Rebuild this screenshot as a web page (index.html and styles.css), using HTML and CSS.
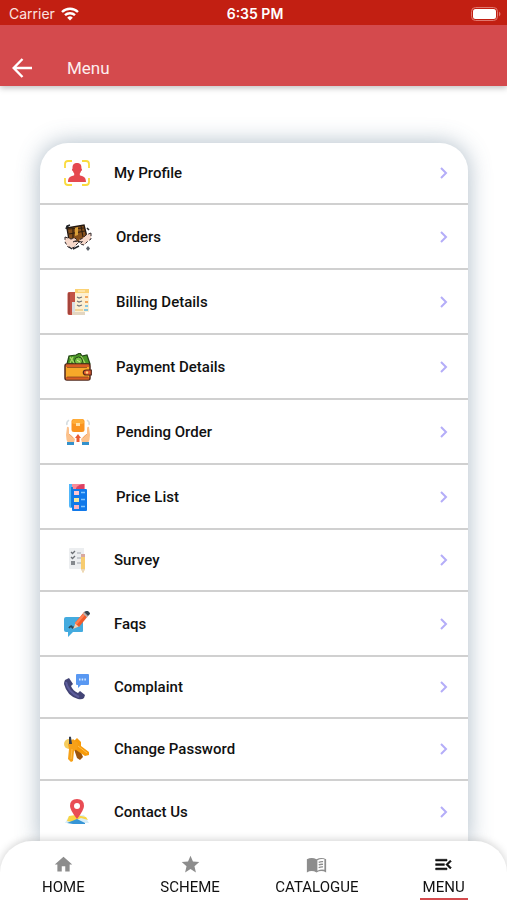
FILE: index.html
```html
<!DOCTYPE html>
<html lang="en">
<head>
<meta charset="utf-8">
<meta name="viewport" content="width=device-width, initial-scale=1">
<title>Menu</title>
<link rel="stylesheet" href="styles.css">
</head>
<body>
<header class="top">
  <div class="status">
    <div class="status-left">
      <span>Carrier</span>
      <svg class="wifi" width="18" height="14" viewBox="0 0 18 14" fill="none" stroke="#fff" stroke-width="2.4"><path d="M1 5a11.5 11.5 0 0 1 16 0M4 8.2a7.2 7.2 0 0 1 10 0"/><path d="M6.2 10.7a4 4 0 0 1 5.6 0L9 13.6z" fill="#fff" stroke="none"/></svg>
    </div>
    <time class="clock">6:35 PM</time>
    <div class="status-right">
      <svg width="30" height="14" viewBox="0 0 30 14"><rect x=".5" y=".5" width="26" height="13" rx="4" fill="none" stroke="#e0786f"/><rect x="2" y="2" width="23" height="10" rx="2.5" fill="#fff"/><path d="M28 4.5q3 2.500 0 5z" fill="#e0786f"/></svg>
    </div>
  </div>
  <div class="bar">
    <button class="back" type="button" aria-label="Back"><svg width="20" height="20" viewBox="0 0 20 20" fill="none" stroke="#fff" stroke-width="2.4"><path d="M20 10H2M10.5 1 1.7 10l8.8 9"/></svg></button>
    <h1>Menu</h1>
  </div>
</header>

<main>
  <nav class="card" aria-label="Account">
    <a class="row" href="#profile">
      <svg class="icon" viewBox="0 0 26 26"><g fill="none" stroke="#fadb3f" stroke-width="1.8"><path d="M1 8V4q0-3 3-3h4M18 1h4q3 0 3 3v4M25 18v4q0 3-3 3h-4M8 25H4q-3 0-3-3v-4"/></g><path d="M13 3c3.500 0 4.700 2.200 4.400 5.500 1 .2.700 2.500-.4 2.800-.2 1-.7 1.700-1.200 2.200v1.800c3 1.200 6.200 1.400 6.200 6.700H4c0-5.300 3.200-5.500 6.200-6.700v-1.800C9.700 13 9.200 12.300 9 11.300c-1.100-.3-1.400-2.600-.4-2.800C8.300 5.200 9.500 3 13 3z" fill="#e5484f"/></svg>
      <span class="label">My Profile</span><svg class="chev" viewBox="0 0 8 12"><path d="m1 1 5 5-5 5"/></svg></a>
    <a class="row tall" href="#orders">
      <svg class="icon wide" viewBox="0 0 28 28"><path d="m3 5 17-3 3 12-8 5-10-2z" fill="#88511c" stroke="#241912" stroke-width="1.400"/><path d="m4 6 16-1M9 5v12M17 3l2 11M5 11l16-3" stroke="#31200f" stroke-width="1.200"/><path d="m11 5 3-1v8l-3 1z" fill="#daa13a"/><path d="m1 14 6 2 4-1 2 2-4 2 5-1v2l-5 5-5-1-3-5zM27 10l-5 2-3 3-4 2 1 2 3-1-3 3 4 1 4-4 3-2z" fill="#f6d8ca" stroke="#30272a" stroke-width="1" stroke-dasharray="3 2"/><path d="m5 24 3 2M9 26l6-3M2 6l1-3 3-1M23 5l2 2" stroke="#25272b" stroke-width="1.500"/><path d="m24 23 2 2.500-2 2.500-2-2.500z" fill="#5b6068"/></svg>
      <span class="label">Orders</span><svg class="chev" viewBox="0 0 8 12"><path d="m1 1 5 5-5 5"/></svg></a>
    <a class="row tall" href="#billing">
      <svg class="icon wide" viewBox="0 0 28 28"><path d="M5 4h9v23H5q-1.500 0-1.500-2V6q0-2 1.500-2z" fill="#c35245"/><path d="M4 5h2v21H4z" fill="#a5443b"/><path d="M8 14h4v12H8z" fill="#d9dde2"/><path d="M11 1h14v23H11z" fill="#fdf0d2"/><path d="M11 1h14v4H11z" fill="#fbd275"/><path d="M14 3h7" stroke="#fff3d5"/><path d="m13 9 2 1 3-1M13 13l2 1 3-1M13 17l2 1 3-1" fill="none" stroke="#70747b" stroke-width="1.300"/><path d="M21 9h3M21 14h3" stroke="#f1a65d" stroke-width="2"/><path d="M21 18h3M20 22h4" stroke="#8bc7df" stroke-width="2"/><path d="M8 24h13v3H8z" fill="#e3d6c1"/><path d="M11 22h8" stroke="#e6b962"/></svg>
      <span class="label">Billing Details</span><svg class="chev" viewBox="0 0 8 12"><path d="m1 1 5 5-5 5"/></svg></a>
    <a class="row tall" href="#payment">
      <svg class="icon wide" viewBox="0 0 28 28"><path d="m3 11 2-8 7-1 4-2 2 3 5-1 3 9z" fill="#4b9827" stroke="#234616" stroke-width="1.200"/><path d="m6 4 5 7M17 3l4 7M9 4l-3 6" stroke="#a4d765" stroke-width="1.300"/><ellipse cx="14.500" cy="8" rx="4" ry="4" fill="#79c347" stroke="#234616"/><path d="m13 7 3 2" stroke="#dbef9b"/><rect x="1" y="11" width="25" height="16" rx="2" fill="#f7a829" stroke="#52281c" stroke-width="1.500"/><path d="M2 11.500h23V14H2zM2 24h23v2.500H2z" fill="#d95d24"/><path d="M3 14.500h20M3 24h21" stroke="#793c1c" stroke-width=".7"/><path d="M27.300 17h-5q-3 0-3 2.500t3 2.500h5z" fill="#e35d32" stroke="#52281c" stroke-width="1.200"/><circle cx="23" cy="19.500" r="1.200" fill="#ffd479"/></svg>
      <span class="label">Payment Details</span><svg class="chev" viewBox="0 0 8 12"><path d="m1 1 5 5-5 5"/></svg></a>
    <a class="row tall" href="#pending">
      <svg class="icon wide" viewBox="0 0 28 28"><rect x="7.500" y="1" width="13" height="13" rx="2.500" fill="#fa9420"/><path d="M8 5q0-4 3-4h6q3 0 3 4l-2 1h-8z" fill="#ffad38"/><path d="M12 5h4v3h-4z" fill="#ffe0a6"/><path d="M5 2q-3 2-2 5M23 2q3 2 2 5" fill="none" stroke="#d4dce0" stroke-width="1.500"/><path d="M3 9q2-1 2 2v5l2 1 4 4-1 4H4q-2-3-2-8zM25 9q-2-1-2 2v5l-2 1-4 4 1 4h6q2-3 2-8z" fill="#fcc18b"/><path d="m5 16 4 4M23 16l-4 4" stroke="#f5a96e"/><path d="m14 16 3 4h-1.500v4h-3v-4H11z" fill="#e95a32"/><path d="M3 24h7v3H3zM18 24h7v3h-7z" fill="#3391cc"/></svg>
      <span class="label">Pending Order</span><svg class="chev" viewBox="0 0 8 12"><path d="m1 1 5 5-5 5"/></svg></a>
    <a class="row tall" href="#prices">
      <svg class="icon wide" viewBox="0 0 28 28"><path d="M5 1h6v24H7q-2 0-2-2z" fill="#50b6fa"/><path d="M8 1h13v6H8z" fill="#f98b97"/><path d="M12 5q3-4 8-4v6h-8z" fill="#dc4265"/><path d="M7 4h2v20H7z" fill="#1781d7"/><rect x="8" y="6" width="15" height="22" rx="1" fill="#1179ea"/><path d="M10 8h5v4h-5z" fill="#ffc6d0"/><path d="M10 15h5v4h-5z" fill="#f8e8a0"/><path d="M10 22h5v4h-5z" fill="#ffb3bd"/><path d="M17 9.500h4M17 16.500h4M17 23.500h4" stroke="#82c6ff" stroke-width="1.500"/></svg>
      <span class="label">Price List</span><svg class="chev" viewBox="0 0 8 12"><path d="m1 1 5 5-5 5"/></svg></a>
    <a class="row" href="#survey">
      <svg class="icon" viewBox="0 0 26 26"><path d="M6 1h14v21H6q-1 0-1-1V2q0-1 1-1z" fill="#eceef0"/><g fill="none" stroke="#6c7075" stroke-width="1.300"><path d="m7 5 1.500 1.500L11 4M7 10l1.500 1.500L11 9"/></g><path d="M7 14h4v4H7z" fill="#85898e"/><path d="M13 6h4M13 11h4M13 16h4" stroke="#b9bec3" stroke-width="1.500"/><path d="M17 9h4v13l-2 4-2-4z" fill="#f7cc70"/><path d="M17 7h4v3h-4z" fill="#d7a8a0"/><path d="m17 22 2 4 2-4z" fill="#ead8bd"/></svg>
      <span class="label">Survey</span><svg class="chev" viewBox="0 0 8 12"><path d="m1 1 5 5-5 5"/></svg></a>
    <a class="row tall" href="#faqs">
      <svg class="icon" viewBox="0 0 26 26"><path d="M2 6h14l3 5v9q0 1-1 1H9l-5 5v-5H2q-2 0-2-2V8q0-2 2-2z" fill="#44abdf"/><path d="M5 17q2-3 3-1t3-1" stroke="#2c4654" stroke-width="1.800" fill="none"/><path d="m12 11 4 4-7 3z" fill="#f3ceb1"/><path d="m20 1 4 4-9 11-4-4z" fill="#f15a29"/><path d="m20 2 1.500 1.500L12.500 14 11 12z" fill="#ff8154"/><path d="m20 1 4 4 1.500-1.500q1-1 0-2L24 0q-1-1-2 0z" fill="#354651"/><path d="m19.500 2 4 4" stroke="#aebbc2" stroke-width="1.300"/></svg>
      <span class="label">Faqs</span><svg class="chev" viewBox="0 0 8 12"><path d="m1 1 5 5-5 5"/></svg></a>
    <a class="row" href="#complaint">
      <svg class="icon" viewBox="0 0 26 26"><path d="M1 6l4-2 4 6-2 2q2 5 7 7l2-2 5 4-1 3q-2 2-6 1Q3 22 0 10q0-2 1-4z" fill="#434476"/><path d="M2 8q2 10 13 15" stroke="#5d5d9c" stroke-width="2" fill="none"/><path d="M13 0h11q1 0 1 1v9q0 1-1 1h-7l-3 3v-3h-1q-1 0-1-1V1q0-1 1-1z" fill="#5998f2"/><path d="M15 5.500h7" stroke="#d3e7ff" stroke-width="2" stroke-dasharray="1.500 1.200"/></svg>
      <span class="label">Complaint</span><svg class="chev" viewBox="0 0 8 12"><path d="m1 1 5 5-5 5"/></svg></a>
    <a class="row" href="#password">
      <svg class="icon" viewBox="0 0 26 26"><path d="m9 9 4-2 6 14-3 3-3-2-2-6z" fill="#9c560e"/><circle cx="5" cy="8" r="5" fill="#f5cd60"/><path d="m9 6 4-4 4 4v4l8 6v3l-4 1-9-6z" fill="#f79b0a"/><path d="m4 8 5-5 5 4-1 6-3 2-1 10-2 1-3-3 1-10z" fill="#f6a119"/><path d="m8 13-1 10M14 10l9 7" stroke="#ffbf50"/><path d="M5 1q1-1 2 0l1 7H5z" fill="#343c4d"/></svg>
      <span class="label">Change Password</span><svg class="chev" viewBox="0 0 8 12"><path d="m1 1 5 5-5 5"/></svg></a>
    <a class="row" href="#contact">
      <svg class="icon" viewBox="0 0 26 26"><path d="m5 17 15-1 5 8H1z" fill="#d8eef8"/><path d="m5 17 7-1 10 2 2 3-7-2-9 4-5-1z" fill="#f9d544"/><path d="m3 24 10-4 8 4v1H9z" fill="#3695d6"/><path d="M13 0q7 0 7 7 0 4-7 13Q6 11 6 7q0-7 7-7z" fill="#e94c54"/><circle cx="13" cy="7" r="3" fill="#fff"/></svg>
      <span class="label">Contact Us</span><svg class="chev" viewBox="0 0 8 12"><path d="m1 1 5 5-5 5"/></svg></a>
  </nav>
</main>

<nav class="tabs" aria-label="Main">
  <a class="tab" href="#home"><svg viewBox="0 0 24 24" fill="#8d8d8d"><path d="M10 20v-6h4v6h5v-8h3L12 3 2 12h3v8z"/></svg><span>HOME</span></a>
  <a class="tab" href="#scheme"><svg viewBox="0 0 24 24" fill="#8d8d8d"><path d="M12 17.270 18.180 21l-1.640-7.030L22 9.240l-7.190-.61L12 2 9.190 8.630 2 9.240l5.460 4.730L5.820 21z"/></svg><span>SCHEME</span></a>
  <a class="tab" href="#catalogue"><svg viewBox="0 0 24 24"><path d="M1 6q5.500-3 11 0 5.500-3 11 0v15q-5.500-3-11 0-5.500-3-11 0z" fill="#8d8d8d"/><path d="M13 7q4-2 8-1v12q-4-1-8 1z" fill="#fff"/><path d="M14.500 9.500q2.500-1 5-.7M14.500 12.500q2.500-1 5-.7M14.500 15.500q2.500-1 5-.7" fill="none" stroke="#8d8d8d" stroke-width="1.500"/></svg><span>CATALOGUE</span></a>
  <a class="tab active" href="#menu" aria-current="page"><svg viewBox="0 0 24 24" fill="#111"><path d="M3 18h13v-2H3zm0-5h10v-2H3zm0-7v2h13V6zm18 9.590L17.420 12 21 8.410 19.590 7l-5 5 5 5z" stroke="#111" stroke-width=".6"/></svg><span>MENU</span></a>
</nav>
</body>
</html>
```
FILE: styles.css
```css
* { box-sizing: border-box; }

body {
  margin: 0;
  background: #fff;
  color: #111;
  font-family: Roboto, "Liberation Sans", sans-serif;
}

a { color: inherit; text-decoration: none; }

.top {
  position: relative;
  color: #fff;
  background: #d44a4d;
  box-shadow: 0 2px 6px rgba(0, 0, 0, .25);
}

.status {
  display: grid;
  grid-template-columns: 1fr auto 1fr;
  align-items: center;
  height: 25px;
  padding: 2px 6px 0 9px;
  background: #c21f12;
  font: 14px/20px Inter, sans-serif;
}

.status-left { display: flex; align-items: center; gap: 6px; color: #fbe3e0; }
.status-right { display: flex; justify-content: flex-end; }
.clock { font-size: 14px; font-weight: 600; }

.bar {
  display: flex;
  align-items: center;
  gap: 35px;
  height: 61px;
  padding: 24px 12px 0;
}

.back { display: flex; padding: 0; border: 0; background: none; }

h1 { margin: 0; font-size: 17px; font-weight: 400; line-height: 20px; color: #fdeeee; }

main { padding: 57px 39px 40px 40px; }

.card {
  overflow: hidden;
  background: #fff;
  border-radius: 28px 28px 0 0;
  box-shadow: 0 0 22px 1px rgba(75, 105, 130, .42);
}

.row {
  display: flex;
  align-items: center;
  gap: 24px;
  height: 62px;
  padding: 0 20px 0 24px;
  border-bottom: 2px solid #d0d0d0;
}

.row:last-child { border-bottom: 0; }
.tall { height: 65px; }

.icon { flex: none; width: 26px; height: 26px; }
.wide { width: 28px; height: 28px; }

.label { flex: 1; font-size: 15px; font-weight: 500; line-height: 20px; }

.chev {
  width: 8px;
  height: 12px;
  fill: none;
  stroke: #b4adf8;
  stroke-width: 2;
}

.tabs {
  position: fixed;
  inset: auto 0 0;
  display: grid;
  grid-template-columns: repeat(4, 1fr);
  height: 59px;
  padding-top: 13px;
  background: #fff;
  border-radius: 32px 32px 0 0;
  box-shadow: 0 -1px 8px rgba(0, 0, 0, .18);
}

.tab {
  display: flex;
  flex-direction: column;
  align-items: center;
  justify-self: center;
  gap: 1px;
  min-width: 48px;
  font-size: 15px;
  line-height: 22px;
}

.tab svg { width: 21px; height: 21px; }
.active { border-bottom: 2px solid #d44a4d; }
```
